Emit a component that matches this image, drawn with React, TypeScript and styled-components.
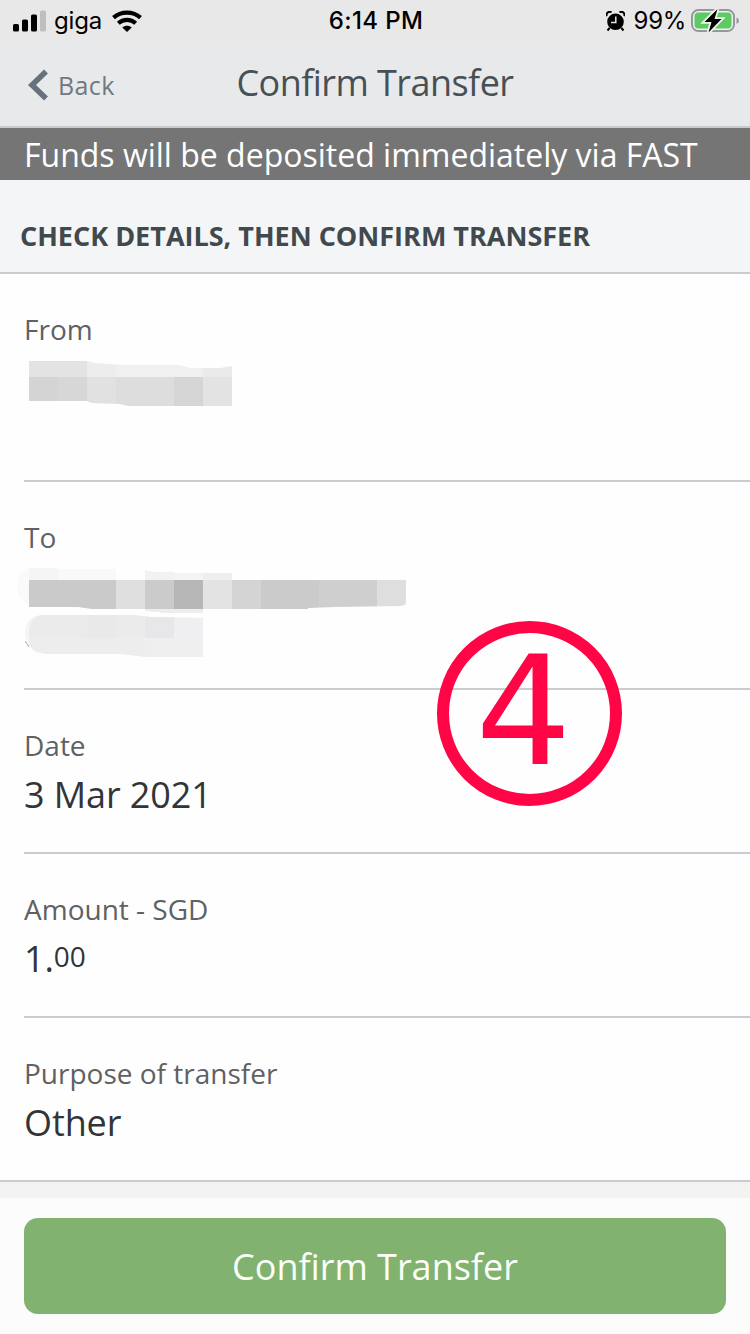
import React from "react";
import styled, { createGlobalStyle } from "styled-components";

const GlobalStyle = createGlobalStyle`
  * { box-sizing: border-box; }
  body { margin: 0; background: #fdfdfe; }
`;

const Screen = styled.main`
  position: relative;
  width: 750px;
  height: 1334px;
  display: flex;
  flex-direction: column;
  overflow: hidden;
  background: #fdfdfe;
  font-family: "Open Sans", "Noto Sans", sans-serif;
  white-space: nowrap;
`;

const StatusBar = styled.div`
  height: 40px;
  flex: none;
  display: grid;
  grid-template-columns: 1fr auto 1fr;
  align-items: center;
  padding: 0 11px 0 13px;
  background: #e8e8e8;
  color: #000;
  font-family: Inter, "Liberation Sans", sans-serif;
  font-size: 24px;
  line-height: 42px;
`;

const StatusGroup = styled.div<{ $end?: boolean }>`
  display: flex;
  align-items: center;
  justify-content: ${(p) => (p.$end ? "flex-end" : "flex-start")};
  height: 40px;
  svg { display: block; flex: none; }
`;

const Carrier = styled.span`
  margin: 0 10px 0 8px;
  letter-spacing: -0.2px;
`;

const Clock = styled.span`
  font-weight: 500;
  font-size: 24px;
  letter-spacing: 0.4px;
`;

const Percent = styled.span`
  margin: 0 5px 0 9px;
  font-size: 24px;
  letter-spacing: -0.3px;
`;

const NavBar = styled.header`
  height: 88px;
  flex: none;
  display: grid;
  grid-template-columns: 1fr auto 1fr;
  align-items: center;
  padding: 0 28px;
  background: #e8e9ea;
  border-bottom: 2px solid #c9caca;
`;

const BackButton = styled.button`
  display: flex;
  align-items: center;
  justify-self: start;
  gap: 10px;
  margin-top: 3px;
  padding: 0;
  border: 0;
  background: none;
  color: #6f7982;
  font: inherit;
  font-size: 25px;
  letter-spacing: 0.4px;
  line-height: 34px;
`;

const Title = styled.h1`
  margin: 0;
  color: #475055;
  font-size: 36px;
  font-weight: 400;
  letter-spacing: -0.55px;
  line-height: 50px;
`;

const Banner = styled.div`
  height: 52px;
  flex: none;
  padding-left: 24px;
  background: #757576;
  color: #fff;
  font-size: 32px;
  line-height: 53px;
`;

const SectionHeading = styled.h2`
  height: 94px;
  flex: none;
  margin: 0;
  padding: 36px 0 0 20px;
  background: #f4f5f6;
  border-bottom: 2px solid #cbcccd;
  color: #40494d;
  font-size: 27px;
  font-weight: 700;
  line-height: 40px;
`;

const Details = styled.dl`
  flex: none;
  margin: 0;
  padding-left: 24px;
  background: #fefefe;
  border-bottom: 2px solid #cbcccd;
`;

const DetailRow = styled.div<{ $height: number }>`
  height: ${(p) => p.$height}px;
  padding-top: 35px;
  border-bottom: 2px solid #cbcccd;
  &:last-child { border-bottom: 0; }
`;

const Label = styled.dt`
  color: #5f6163;
  font-size: 28px;
  line-height: 40px;
`;

const Value = styled.dd`
  margin: 5px 0 0;
  color: #323437;
  font-size: 36px;
  letter-spacing: -0.1px;
  line-height: 50px;
`;

const Redacted = styled.dd<{ $offset: number }>`
  margin: ${(p) => p.$offset}px 0 0 -8px;
  svg { display: block; }
`;

const Cents = styled.span`
  position: relative;
  top: -5px;
  font-size: 28px;
`;

const Footer = styled.footer`
  flex: 1;
  padding: 20px 24px;
  border-top: 16px solid #f3f3f4;
  background: #fcfcfd;
`;

const ConfirmButton = styled.button`
  display: block;
  width: 100%;
  height: 96px;
  padding: 0;
  border: 0;
  border-radius: 14px;
  background: #81b270;
  color: #fbfff8;
  font: inherit;
  font-size: 36px;
  line-height: 98px;
`;

const StepBadge = styled.div`
  position: absolute;
  left: 437px;
  top: 621px;
  width: 185px;
  height: 185px;
  padding-right: 12px;
  border: 12px solid #ff0546;
  border-radius: 50%;
  color: #ff0546;
  font-family: "DejaVu Sans", sans-serif;
  font-size: 151px;
  line-height: 158px;
  text-align: center;
`;

const SignalIcon = () => (
  <svg width="33" height="22" viewBox="0 0 33 22">
    <rect x="0" y="14" width="6" height="7.500" rx="1.600" />
    <rect x="9" y="9.500" width="6" height="12" rx="1.600" />
    <rect x="18" y="4.500" width="6" height="17" rx="1.600" />
    <rect x="27" y="0.500" width="6" height="21" rx="1.600" fill="#bfbfbf" />
  </svg>
);

const WifiIcon = () => (
  <svg width="30" height="22" viewBox="0 0 30 22">
    <g fill="none" stroke="#000" strokeWidth="4.200">
      <path d="M1.500 7.600C9 .9 21 .9 28.500 7.600" />
      <path d="M6.300 13.200C11.300 8.700 18.700 8.700 23.700 13.200" />
    </g>
    <path d="M10.300 17.600C12.900 15.200 17.100 15.200 19.700 17.600L15 22Z" />
  </svg>
);

const AlarmIcon = () => (
  <svg width="19" height="21" viewBox="0 0 19 21">
    <circle cx="9.500" cy="10.800" r="8.300" />
    <path d="M.8 5.200A3.200 3.200 0 0 1 5.500 1.300M18.200 5.200A3.200 3.200 0 0 0 13.500 1.300M3.600 17L1.500 19.500M15.400 17L17.500 19.500" fill="none" stroke="#000" strokeWidth="2" />
    <path d="M9.800 5.500V11.600H5" fill="none" stroke="#e8e8e8" strokeWidth="1.500" />
  </svg>
);

const BatteryIcon = () => (
  <svg width="48" height="26" viewBox="0 0 48 26">
    <rect x="1" y="2" width="42" height="21" rx="6.500" fill="#eef0ee" stroke="#96979b" strokeWidth="2" />
    <rect x="3.500" y="4.500" width="37" height="16" rx="4" fill="#5dca63" />
    <path d="M45.500 9.500V16Q48 15 48 12.700T45.500 9.500Z" fill="#96979b" />
    <path d="M26.500 1L13.500 14H20.500L17.500 24.500L30.500 11H23.500Z" stroke="#edf3ed" strokeWidth="3.600" />
    <path d="M26.500 1L13.500 14H20.500L17.500 24.500L30.500 11H23.500Z" />
  </svg>
);

const BackChevron = () => (
  <svg width="20" height="32" viewBox="0 0 20 32">
    <path d="M18 2.500L4 16L18 29.500" fill="none" stroke="#66737e" strokeWidth="5.600" />
  </svg>
);

/* Pixelated account strips; both drawings start 16px from the screen edge. */
const FromMosaic = () => (
  <svg width="230" height="50" viewBox="16 360 230 50" shapeRendering="crispEdges">
    <clipPath id="fromStrip">
      <path d="M29 361H87L95 363L125 365H180L190 368H203L220 368L232 366V406H128L120 404L92 403L86 401H29Z" />
    </clipPath>
    <g clipPath="url(#fromStrip)">
      <rect x="29" y="360" width="58" height="17" fill="#e3e3e3" />
      <rect x="87" y="360" width="29" height="17" fill="#ededed" />
      <rect x="116" y="360" width="87" height="17" fill="#f0f0f1" />
      <rect x="203" y="360" width="29" height="17" fill="#eaeaeb" />
      <rect x="29" y="377" width="29" height="30" fill="#d4d4d4" />
      <rect x="58" y="377" width="29" height="30" fill="#d7d7d7" />
      <rect x="87" y="377" width="29" height="30" fill="#e1e1e1" />
      <rect x="116" y="377" width="58" height="30" fill="#dddddd" />
      <rect x="174" y="377" width="29" height="30" fill="#d5d5d6" />
      <rect x="203" y="377" width="29" height="30" fill="#e3e3e4" />
    </g>
  </svg>
);

const ToMosaic = () => (
  <svg width="396" height="94" viewBox="16 566 396 94" shapeRendering="crispEdges">
    <path d="M29 568Q17 574 17 588Q17 600 29 606Z" fill="#fafafa" />
    <path d="M29 568H58V580H29Z" fill="#f5f5f5" />
    <path d="M58 569H116V580H58Z" fill="#f9f9f9" />
    <path d="M145 570L155 572H174V580H145Z" fill="#f2f2f3" />
    <path d="M174 573H203V580H174Z" fill="#f4f4f5" />
    <path d="M203 573H232V580H203Z" fill="#eeeeef" />
    <path d="M145 609H203V613H165L145 611Z" fill="#ededee" />
    <clipPath id="toStrip">
      <path d="M29 580H406V603Q405 606 400 606L335 607L308 608V609H92L78 607H29Z" />
    </clipPath>
    <g clipPath="url(#toStrip)">
      <rect x="29" y="580" width="87" height="30" fill="#cacaca" />
      <rect x="116" y="580" width="29" height="30" fill="#dfdfdf" />
      <rect x="145" y="580" width="29" height="30" fill="#cbcbcc" />
      <rect x="174" y="580" width="29" height="30" fill="#b7b7b8" />
      <rect x="203" y="580" width="29" height="30" fill="#e3e3e4" />
      <rect x="232" y="580" width="29" height="30" fill="#d4d4d5" />
      <rect x="261" y="580" width="58" height="30" fill="#cbcbcc" />
      <rect x="319" y="580" width="58" height="30" fill="#cfcfd0" />
      <rect x="377" y="580" width="29" height="30" fill="#dededf" />
    </g>
    <path d="M40 615Q25 617 25 633Q26 650 40 654Z" fill="#f5f5f5" />
    <path d="M25 641L29 647" stroke="#c4c4c4" />
    <clipPath id="toSecondStrip">
      <path d="M42 615H135L150 617L203 618V657H145L120 654H45Q29 650 29 642V628Q32 616 42 615Z" />
    </clipPath>
    <g clipPath="url(#toSecondStrip)">
      <rect x="29" y="614" width="174" height="24" fill="#ebebeb" />
      <rect x="87" y="614" width="29" height="24" fill="#e9e9e9" />
      <rect x="145" y="614" width="29" height="24" fill="#e7e7e9" />
      <rect x="174" y="614" width="29" height="24" fill="#efeff1" />
      <rect x="29" y="638" width="174" height="20" fill="#ededed" />
      <rect x="145" y="638" width="58" height="20" fill="#efeff0" />
    </g>
  </svg>
);

export default function App() {
  return (
    <Screen>
      <GlobalStyle />
      <StatusBar>
        <StatusGroup>
          <SignalIcon />
          <Carrier>giga</Carrier>
          <WifiIcon />
        </StatusGroup>
        <Clock>6:14 PM</Clock>
        <StatusGroup $end>
          <AlarmIcon />
          <Percent>99%</Percent>
          <BatteryIcon />
        </StatusGroup>
      </StatusBar>
      <NavBar>
        <BackButton>
          <BackChevron />
          Back
        </BackButton>
        <Title>Confirm Transfer</Title>
      </NavBar>
      <Banner>Funds will be deposited immediately via FAST</Banner>
      <SectionHeading>CHECK DETAILS, THEN CONFIRM TRANSFER</SectionHeading>
      <Details>
        <DetailRow $height={208}>
          <Label>From</Label>
          <Redacted $offset={11}><FromMosaic /></Redacted>
        </DetailRow>
        <DetailRow $height={208}>
          <Label>To</Label>
          <Redacted $offset={9}><ToMosaic /></Redacted>
        </DetailRow>
        <DetailRow $height={164}>
          <Label>Date</Label>
          <Value>3 Mar 2021</Value>
        </DetailRow>
        <DetailRow $height={164}>
          <Label>Amount - SGD</Label>
          <Value>1.<Cents>00</Cents></Value>
        </DetailRow>
        <DetailRow $height={162}>
          <Label>Purpose of transfer</Label>
          <Value>Other</Value>
        </DetailRow>
      </Details>
      <Footer>
        <ConfirmButton>Confirm Transfer</ConfirmButton>
      </Footer>
      <StepBadge>4</StepBadge>
    </Screen>
  );
}
